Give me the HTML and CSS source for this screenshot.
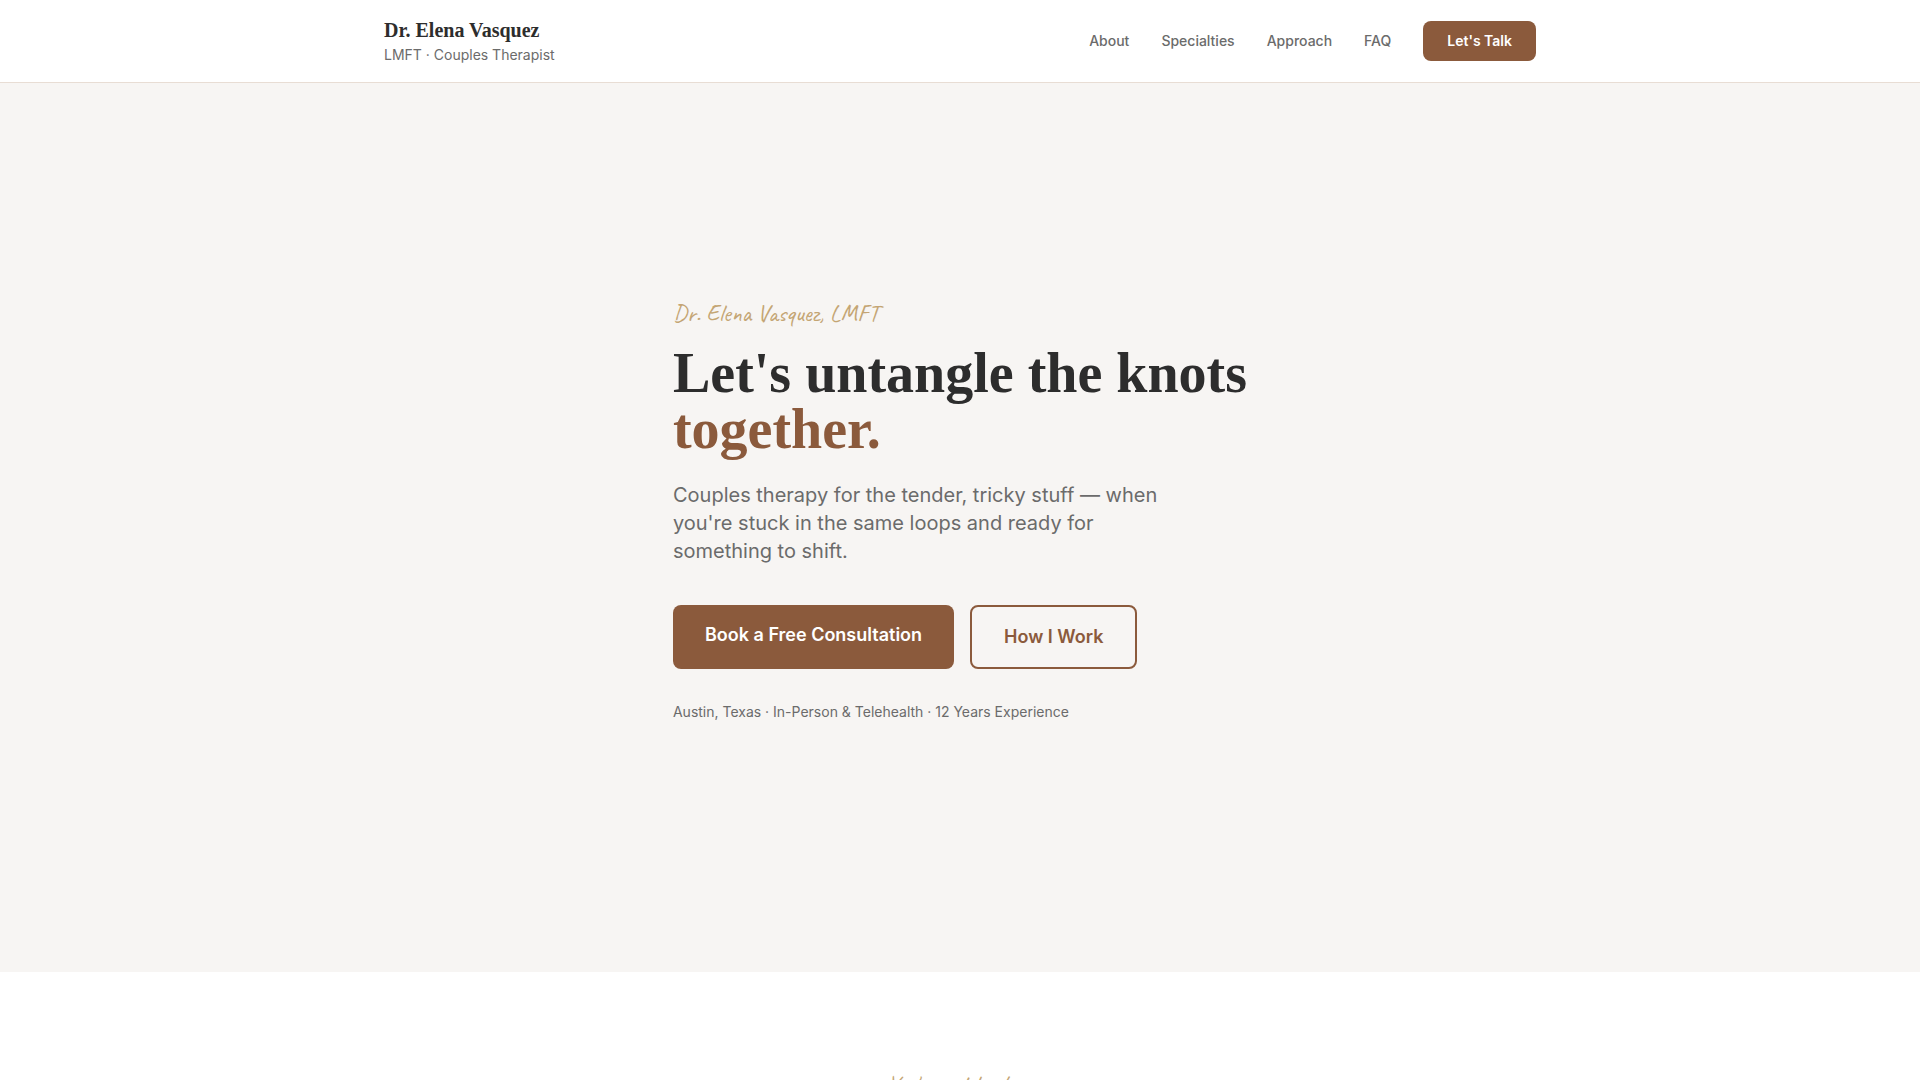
FILE: index.html
```html
<!DOCTYPE html>
<html lang="en">
<head>
  <meta charset="UTF-8">
  <meta name="viewport" content="width=device-width, initial-scale=1.0">
  <title>Dr. Elena Vasquez, LMFT</title>
  <link rel="stylesheet" href="styles.css">
</head>
<body>
  <header class="site-header">
    <div class="header-inner">
      <div class="brand">
        <a href="#" class="brand-name">Dr. Elena Vasquez</a>
        <span class="brand-title">LMFT · Couples Therapist</span>
      </div>
      <nav class="site-nav">
        <a href="#about">About</a>
        <a href="#specialties">Specialties</a>
        <a href="#approach">Approach</a>
        <a href="#faq">FAQ</a>
        <a href="#contact" class="nav-cta">Let's Talk</a>
      </nav>
    </div>
  </header>

  <section class="hero">
    <div class="hero-content">
      <p class="script">Dr. Elena Vasquez, LMFT</p>
      <h1>Let's untangle the knots<br><span class="accent">together.</span></h1>
      <p class="hero-text">Couples therapy for the tender, tricky stuff — when you're stuck in the same loops and ready for something to shift.</p>
      <div class="hero-buttons">
        <a href="#contact" class="btn btn-primary">Book a Free Consultation</a>
        <a href="#approach" class="btn btn-outline">How I Work</a>
      </div>
      <p class="hero-note">Austin, Texas · In-Person &amp; Telehealth · 12 Years Experience</p>
    </div>
  </section>

  <section class="about" id="about">
    <p class="script">You're not broken.</p>
  </section>
</body>
</html>
```
FILE: styles.css
```css
* {
  margin: 0;
  padding: 0;
  box-sizing: border-box;
}
body {
  font-family: Inter, sans-serif;
  color: #2d2d2d;
  background-color: #fff;
}
a {
  text-decoration: none;
}
.site-header {
  position: fixed;
  top: 0;
  left: 0;
  right: 0;
  background-color: #fff;
  border-bottom: 1px solid #e8ddd4;
}
.header-inner {
  max-width: 1200px;
  margin: 0 auto;
  padding: 16px 24px;
  display: flex;
  justify-content: space-between;
  align-items: center;
}
.brand {
  display: flex;
  flex-direction: column;
}
.brand-name {
  font-family: "Liberation Serif", serif;
  font-size: 20px;
  line-height: 28px;
  font-weight: 700;
  color: #2d2d2d;
}
.brand-title {
  font-size: 14px;
  line-height: 22px;
  color: #6b6b6b;
}
.site-nav {
  display: flex;
  align-items: center;
  gap: 32px;
}
.site-nav a {
  font-size: 14px;
  line-height: 20px;
  font-weight: 500;
  color: #6b6b6b;
}
.site-nav .nav-cta {
  padding: 10px 24px;
  border-radius: 8px;
  background-color: #8b5a3c;
  color: #fff;
  font-weight: 600;
}
.hero {
  min-height: 90vh;
  padding: 128px 24px 80px;
  display: flex;
  align-items: center;
  justify-content: center;
  background-color: #f7f5f3;
}
.script {
  font-family: Caveat, cursive;
  font-size: 24px;
  line-height: 32px;
  color: #c4a574;
}
.hero-content .script {
  margin-bottom: 16px;
}
.hero h1 {
  font-family: "Liberation Serif", serif;
  font-size: 56px;
  line-height: 56px;
  font-weight: 700;
  margin-bottom: 24px;
}
.accent {
  color: #8b5a3c;
}
.hero-text {
  max-width: 512px;
  font-size: 20px;
  line-height: 28px;
  color: #6b6b6b;
  margin-bottom: 40px;
}
.hero-buttons {
  display: flex;
  gap: 16px;
  margin-bottom: 32px;
}
.btn {
  padding: 16px 32px;
  border-radius: 8px;
  font-size: 18px;
  line-height: 28px;
  font-weight: 600;
}
.btn-primary {
  background-color: #8b5a3c;
  color: #fff;
}
.btn-outline {
  border: 2px solid #8b5a3c;
  color: #8b5a3c;
}
.hero-note {
  font-size: 14px;
  line-height: 22px;
  color: #6b6b6b;
}
.about {
  padding: 96px 24px;
  text-align: center;
}
```
